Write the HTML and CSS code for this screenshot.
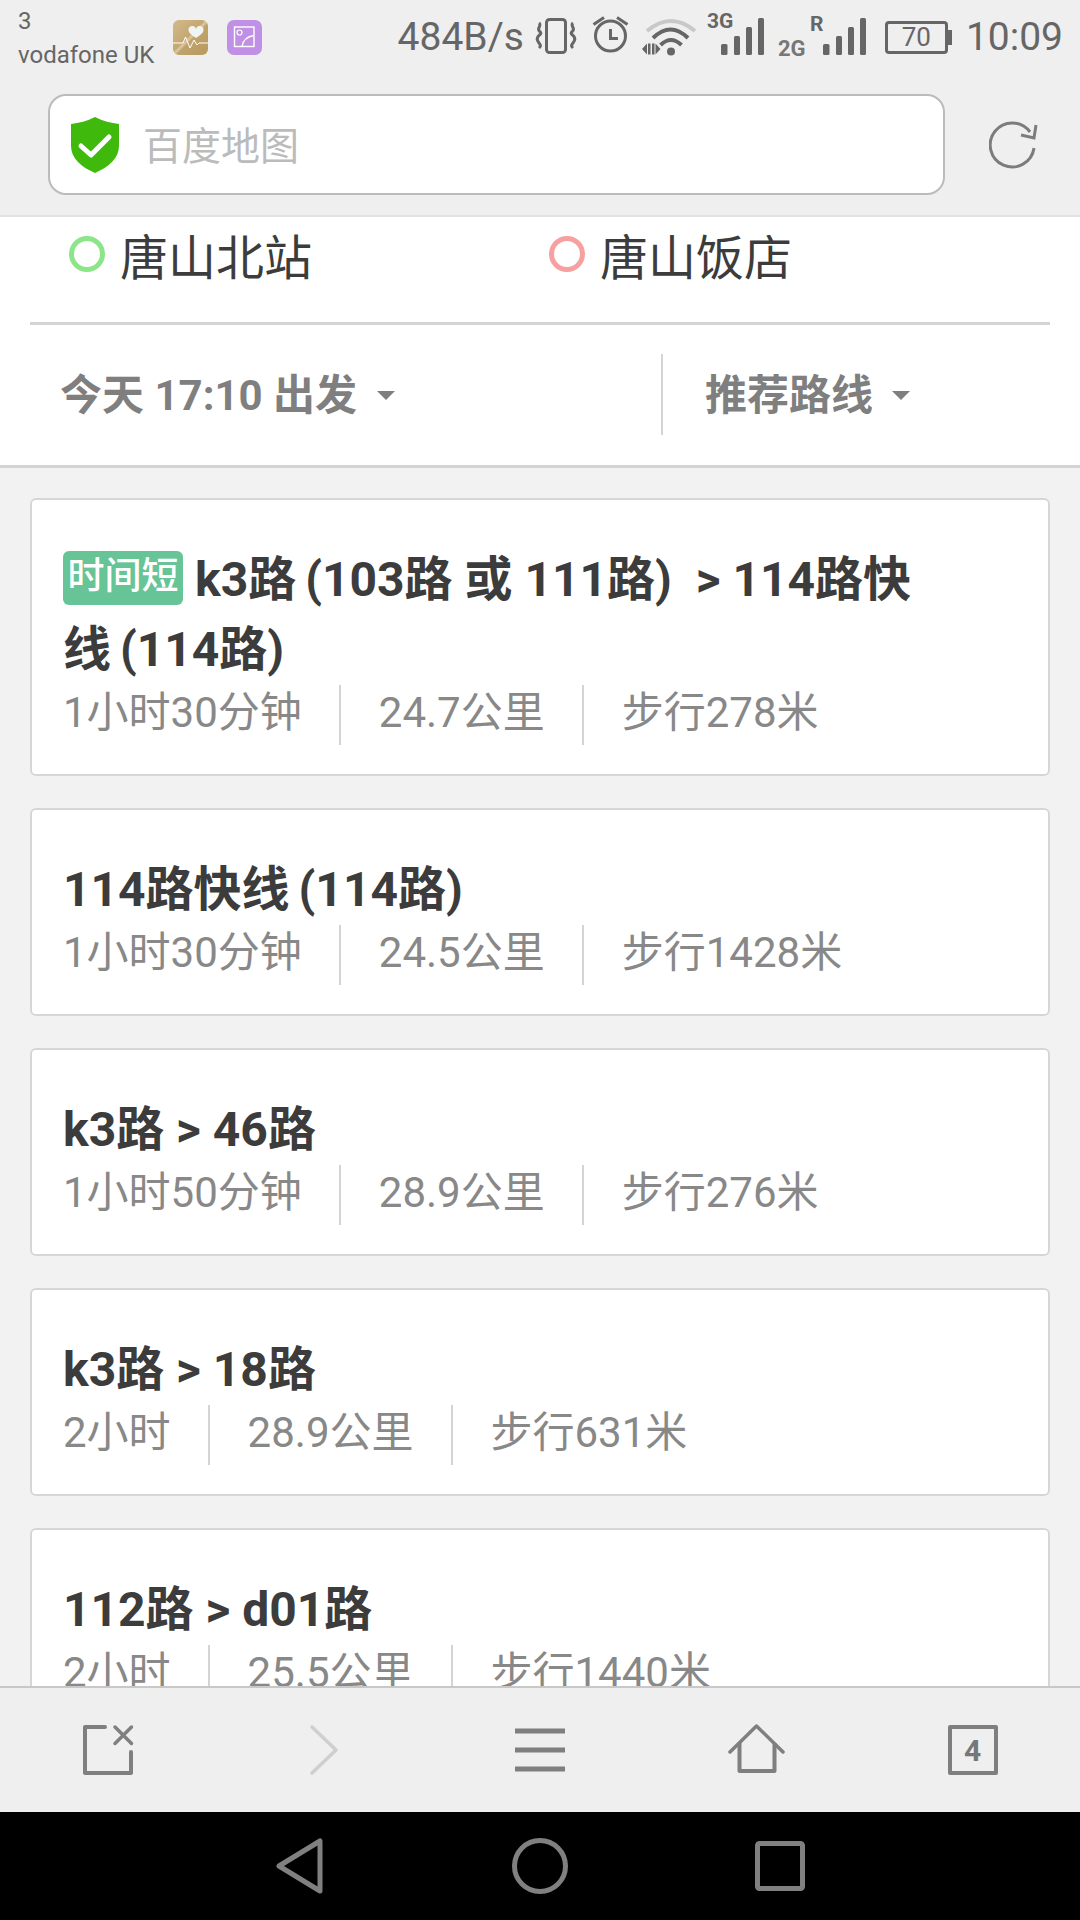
FILE: index.html
```html
<!DOCTYPE html>
<html lang="zh-CN">
<head>
    <meta charset="UTF-8">
    <meta name="viewport" content="width=device-width, initial-scale=1.0">
    <title>百度地图</title>
    <link rel="stylesheet" href="styles.css">
</head>
<body>
    <div class="screen">
        <!-- status bar -->
        <div class="status">
            <div class="carrier">
                <div>3</div>
                <div>vodafone UK</div>
            </div>
            <svg class="tile" viewBox="0 0 35 35">
                <defs>
                    <linearGradient id="gold" x1="0" y1="0" x2="1" y2="1">
                        <stop offset="0" stop-color="#d2ba8b"/>
                        <stop offset="0.45" stop-color="#c4a873"/>
                        <stop offset="0.5" stop-color="#dccaa2"/>
                        <stop offset="0.55" stop-color="#c0a26c"/>
                        <stop offset="1" stop-color="#b8995f"/>
                    </linearGradient>
                </defs>
                <rect width="35" height="35" rx="6" fill="url(#gold)"/>
                <path d="M23 18c-5-3-7.500-5.500-7.500-8a3.800 3.800 0 0 1 7.500-1 3.800 3.800 0 0 1 7.500 1c0 2.500-2.500 5-7.500 8z" fill="#f0f4f2"/>
                <path d="M0 23h10l2.500-6 4.500 11 4-8 3 5 2-2h9" fill="none" stroke="#fff" stroke-width="1"/>
            </svg>
            <svg class="tile" viewBox="0 0 35 35">
                <rect width="35" height="35" rx="7" fill="#c08fe6"/>
                <rect x="7.500" y="7" width="19.500" height="19.500" fill="none" stroke="#fff" stroke-width="1.400"/>
                <circle cx="12.500" cy="12.500" r="2.500" fill="none" stroke="#fff" stroke-width="1.200"/>
                <path d="M15 26.500c1-6 5-10 12-11" fill="none" stroke="#fff" stroke-width="1.400"/>
            </svg>

            <div class="status-right">
                <span class="speed">484B/s</span>
                <svg class="ic-vibrate" width="44" height="38" viewBox="0 0 44 38">
                    <rect x="12.500" y="1.500" width="19" height="33" rx="3" fill="none" stroke="#666" stroke-width="3"/>
                    <path d="M5 5c3 2.500-2 5 0 7.500s3 2.500 0 5-2 5 0 7.500 2 3 0 5M39 5c-3 2.500 2 5 0 7.500s-3 2.500 0 5 2 5 0 7.500-2 3 0 5" fill="none" stroke="#666" stroke-width="3"/>
                </svg>
                <svg class="ic-alarm" width="37" height="40" viewBox="0 0 37 40">
                    <circle cx="18.500" cy="20" r="15" fill="none" stroke="#666" stroke-width="3"/>
                    <path d="M18.500 13v9.500H26" fill="none" stroke="#666" stroke-width="3"/>
                    <path d="M1.500 8.500L12 1.500M35.500 8.500L25 1.500" fill="none" stroke="#666" stroke-width="3"/>
                </svg>
                <svg class="ic-wifi" width="54" height="38" viewBox="0 0 54 38">
                    <path d="M5 13Q29-7 53 13" fill="none" stroke="#c8c8c8" stroke-width="4"/>
                    <path d="M11 20Q28.500 3 46 20M18.500 27Q29 17 39.500 27" fill="none" stroke="#666" stroke-width="4"/>
                    <circle cx="29" cy="33.500" r="4" fill="#666"/>
                    <path d="M0 31l5-5.500v11zM6 25.500h2.500v11H6zM10 25.500h2.500v11H10zM13.500 25.500l5 5.500-5 5.500z" fill="#666"/>
                </svg>
                <svg class="ic-signal ic-3g" width="58" height="56" viewBox="0 0 58 56">
                    <text x="0" y="21" class="net-label">3G</text>
                    <rect x="14" y="37" width="6.500" height="11" rx="1.500" fill="#666"/>
                    <rect x="27" y="29" width="6" height="19" rx="1.500" fill="#666"/>
                    <rect x="39" y="20" width="6" height="28" rx="1.500" fill="#666"/>
                    <rect x="51" y="11" width="6" height="37" rx="1.500" fill="#666"/>
                </svg>
                <svg class="ic-signal ic-2g" width="89" height="56" viewBox="0 0 89 56">
                    <text x="0" y="49" class="net-label net-faded">2G</text>
                    <text x="32" y="24" class="net-label">R</text>
                    <rect x="45" y="37" width="6.500" height="11" rx="1.500" fill="#666"/>
                    <rect x="58" y="29" width="6" height="19" rx="1.500" fill="#666"/>
                    <rect x="70" y="20" width="6" height="28" rx="1.500" fill="#666"/>
                    <rect x="82" y="11" width="6" height="37" rx="1.500" fill="#666"/>
                </svg>
                <div class="battery"><span>70</span></div>
                <span class="clock">10:09</span>
            </div>
        </div>

        <!-- address bar -->
        <div class="address">
            <div class="address-box">
                <svg class="shield" width="50" height="56" viewBox="0 0 50 56">
                    <path d="M25 0c8 4 16 6 24 7v22c0 12-10 21-24 27C11 50 1 41 1 29V7c8-1 16-3 24-7z" fill="#3fba0c"/>
                    <path d="M11 29l10 9 18-18" fill="none" stroke="#fff" stroke-width="5" stroke-linecap="round" stroke-linejoin="round"/>
                </svg>
                <span class="address-text">百度地图</span>
            </div>
            <svg class="reload" width="50" height="50" viewBox="0 0 50 50">
                <path d="M41 12A22 22 0 1 0 45 28" fill="none" stroke="#7c7c7c" stroke-width="3"/>
                <path d="M47 5l-2 13-13-3" fill="none" stroke="#7c7c7c" stroke-width="3"/>
            </svg>
        </div>

        <!-- search summary -->
        <div class="summary">
            <div class="stops">
                <div class="stop"><i class="ring ring-start"></i>唐山北站</div>
                <div class="stop"><i class="ring ring-end"></i>唐山饭店</div>
            </div>
            <div class="filters">
                <div class="filter filter-time">今天 17:10 出发<i class="caret"></i></div>
                <div class="filter filter-sort">推荐路线<i class="caret"></i></div>
            </div>
        </div>

        <!-- route list -->
        <div class="routes">
            <div class="card">
                <div class="title"><span class="tag">时间短</span>k3路 <span class="alt">(103路 或 111路)</span> &nbsp;&gt; 114路快线 <span class="alt">(114路)</span></div>
                <div class="meta"><span>1小时30分钟</span><span>24.7公里</span><span>步行278米</span></div>
            </div>
            <div class="card">
                <div class="title">114路快线 <span class="alt">(114路)</span></div>
                <div class="meta"><span>1小时30分钟</span><span>24.5公里</span><span>步行1428米</span></div>
            </div>
            <div class="card">
                <div class="title">k3路 &gt; 46路</div>
                <div class="meta"><span>1小时50分钟</span><span>28.9公里</span><span>步行276米</span></div>
            </div>
            <div class="card">
                <div class="title">k3路 &gt; 18路</div>
                <div class="meta"><span>2小时</span><span>28.9公里</span><span>步行631米</span></div>
            </div>
            <div class="card">
                <div class="title">112路 &gt; d01路</div>
                <div class="meta"><span>2小时</span><span>25.5公里</span><span>步行1440米</span></div>
            </div>
        </div>

        <!-- browser toolbar -->
        <div class="toolbar">
            <svg width="52" height="52" viewBox="0 0 52 52">
                <path d="M23 3H3v46h46V28" fill="none" stroke="#7f7f7f" stroke-width="4" stroke-linejoin="round" stroke-linecap="round"/>
                <path d="M33 3l16.500 16.500M49.500 3L33 19.500" fill="none" stroke="#7f7f7f" stroke-width="3.500" stroke-linecap="round"/>
            </svg>
            <svg width="30" height="52" viewBox="0 0 30 52">
                <path d="M3 3l24 23L3 49" fill="none" stroke="#cfcfcf" stroke-width="3.500" stroke-linecap="round" stroke-linejoin="round"/>
            </svg>
            <svg width="52" height="44" viewBox="0 0 52 44">
                <path d="M1 3h50M1 22h50M1 41h50" fill="none" stroke="#7f7f7f" stroke-width="5"/>
            </svg>
            <svg width="58" height="52" viewBox="0 0 58 52">
                <path d="M3 28L29.500 2 56 28" fill="none" stroke="#7f7f7f" stroke-width="3.500" stroke-linecap="round" stroke-linejoin="round"/>
                <path d="M12.500 19v28h35V19" fill="none" stroke="#7f7f7f" stroke-width="4" stroke-linejoin="round"/>
            </svg>
            <div class="tabs">4</div>
        </div>

        <!-- system navigation -->
        <div class="nav">
            <svg width="48" height="56" viewBox="0 0 48 56">
                <path d="M44 3v50L3 28z" fill="none" stroke="#808080" stroke-width="5" stroke-linejoin="round"/>
            </svg>
            <svg width="56" height="56" viewBox="0 0 56 56">
                <circle cx="28" cy="28" r="25.500" fill="none" stroke="#808080" stroke-width="5"/>
            </svg>
            <svg width="50" height="50" viewBox="0 0 50 50">
                <rect x="2.500" y="2.500" width="45" height="45" rx="2" fill="none" stroke="#808080" stroke-width="5"/>
            </svg>
        </div>
    </div>
</body>
</html>
```

FILE: styles.css
```css
* {
    box-sizing: border-box;
}

body {
    margin: 0;
    font-family: Roboto, "Noto Sans CJK SC", sans-serif;
    background-color: #f2f2f2;
}

.screen {
    width: 1080px;
    height: 1920px;
    display: flex;
    flex-direction: column;
    overflow: hidden;
}

/* status bar */
.status {
    height: 74px;
    flex: none;
    display: flex;
    align-items: center;
    padding: 0 17px 0 18px;
    background-color: #efefef;
    color: #666;
}

.carrier {
    width: 155px;
    font-size: 24px;
    line-height: 34px;
    margin-top: 1px;
}

.tile {
    width: 35px;
    height: 35px;
    margin-right: 19px;
}

.status-right {
    flex: 1;
    display: flex;
    align-items: center;
    justify-content: flex-end;
}

.speed,
.clock {
    font-size: 39px;
    line-height: 44px;
}

.speed {
    margin-right: 10px;
}

.ic-vibrate {
    margin-right: 14px;
}

.ic-alarm {
    margin-right: 13px;
    margin-top: -2px;
}

.ic-wifi {
    margin-right: 11px;
}

.ic-signal {
    margin-top: -4px;
    margin-right: 13px;
}

.ic-2g {
    margin-right: 18px;
}

.net-label {
    font-size: 21px;
    font-weight: 700;
    fill: #666;
}

.net-faded {
    font-size: 22px;
    fill: #777;
}

.battery {
    width: 63px;
    height: 33px;
    margin-right: 18px;
    border: 3px solid #666;
    border-radius: 4px;
    display: flex;
    align-items: center;
    justify-content: center;
    font-size: 26px;
    position: relative;
}

.battery::after {
    content: "";
    position: absolute;
    right: -7px;
    top: 6px;
    width: 4px;
    height: 15px;
    background-color: #666;
}

/* address bar */
.address {
    height: 143px;
    flex: none;
    display: flex;
    align-items: flex-start;
    padding: 20px 0 0 48px;
    background-color: #efefef;
    border-bottom: 2px solid #e2e2e2;
}

.address-box {
    width: 897px;
    height: 101px;
    display: flex;
    align-items: center;
    padding-left: 20px;
    background-color: #fff;
    border: 2px solid #bbb;
    border-radius: 18px;
}

.shield {
    margin-right: 23px;
}

.address-text {
    margin-bottom: 4px;
    font-size: 39px;
    color: #bbb;
}

.reload {
    margin: 26px 0 0 44px;
}

/* origin, destination and filters */
.summary {
    flex: none;
    background-color: #fff;
    border-bottom: 3px solid #d4d4d4;
}

.stops {
    height: 108px;
    margin: 0 30px;
    padding-left: 39px;
    display: grid;
    grid-template-columns: 480px 1fr;
    align-items: start;
    border-bottom: 3px solid #d4d4d4;
}

.stop {
    display: flex;
    align-items: center;
    height: 74px;
    font-size: 48px;
    color: #3c3c3c;
}

.ring {
    width: 36px;
    height: 36px;
    margin-right: 15px;
    border-radius: 50%;
    border-style: solid;
    border-width: 5px;
}

.ring-start {
    border-color: #8de58a;
}

.ring-end {
    border-color: #f6a0a0;
}

.filters {
    height: 140px;
    padding-bottom: 2px;
    display: flex;
    align-items: center;
}

.filter {
    display: flex;
    align-items: center;
    height: 81px;
    padding-bottom: 5px;
    font-size: 42px;
    font-weight: 700;
    color: #7f7f7f;
}

.filter-time {
    width: 661px;
    padding-left: 60px;
}

.filter-sort {
    padding-left: 42px;
    border-left: 2px solid #d4d4d4;
}

.caret {
    width: 0;
    height: 0;
    margin: 7px 0 0 20px;
    border-style: solid;
    border-width: 9px 9px 0;
    border-color: #7f7f7f transparent transparent;
}

.filter-sort .caret {
    margin-left: 19px;
}

/* route cards */
.routes {
    flex: 1;
    min-height: 0;
    overflow: hidden;
    padding: 30px 30px 0;
}

.card {
    margin-bottom: 32px;
    padding: 45px 96px 29px 32px;
    background-color: #fff;
    border: 2px solid #d6d6d6;
    border-radius: 6px;
}

.title {
    font-size: 48px;
    font-weight: 700;
    line-height: 70px;
    color: #3c3c3c;
    margin-left: -1px;
}

.alt {
    margin-left: -3px;
}

.tag {
    display: inline-block;
    height: 54px;
    margin-top: -4px;
    margin-right: 12px;
    padding: 0 4.500px;
    font-size: 37px;
    font-weight: 500;
    line-height: 52px;
    color: #fff;
    vertical-align: 7px;
    background-color: #67c496;
    border-radius: 6px;
}

.meta {
    display: flex;
    height: 60px;
    margin-left: -1px;
    font-size: 42px;
    line-height: 56px;
    color: #888;
}

.meta span {
    padding: 0 37.500px;
    border-left: 2px solid #d4d4d4;
}

.meta span:first-child {
    padding-left: 0;
    border-left: none;
}

/* browser toolbar */
.toolbar {
    height: 126px;
    flex: none;
    display: grid;
    grid-template-columns: repeat(5, 216px);
    place-items: center;
    background-color: #efefef;
    border-top: 2px solid #c8c8c8;
}

.tabs {
    width: 50px;
    height: 50px;
    margin-left: 1px;
    display: flex;
    align-items: center;
    justify-content: center;
    font-size: 30px;
    font-weight: 700;
    color: #777;
    border: 4px solid #7f7f7f;
    border-radius: 2px;
}

/* system navigation */
.nav {
    height: 108px;
    flex: none;
    display: grid;
    grid-template-columns: repeat(3, 240px);
    justify-content: center;
    place-items: center;
    background-color: #000;
}
```
